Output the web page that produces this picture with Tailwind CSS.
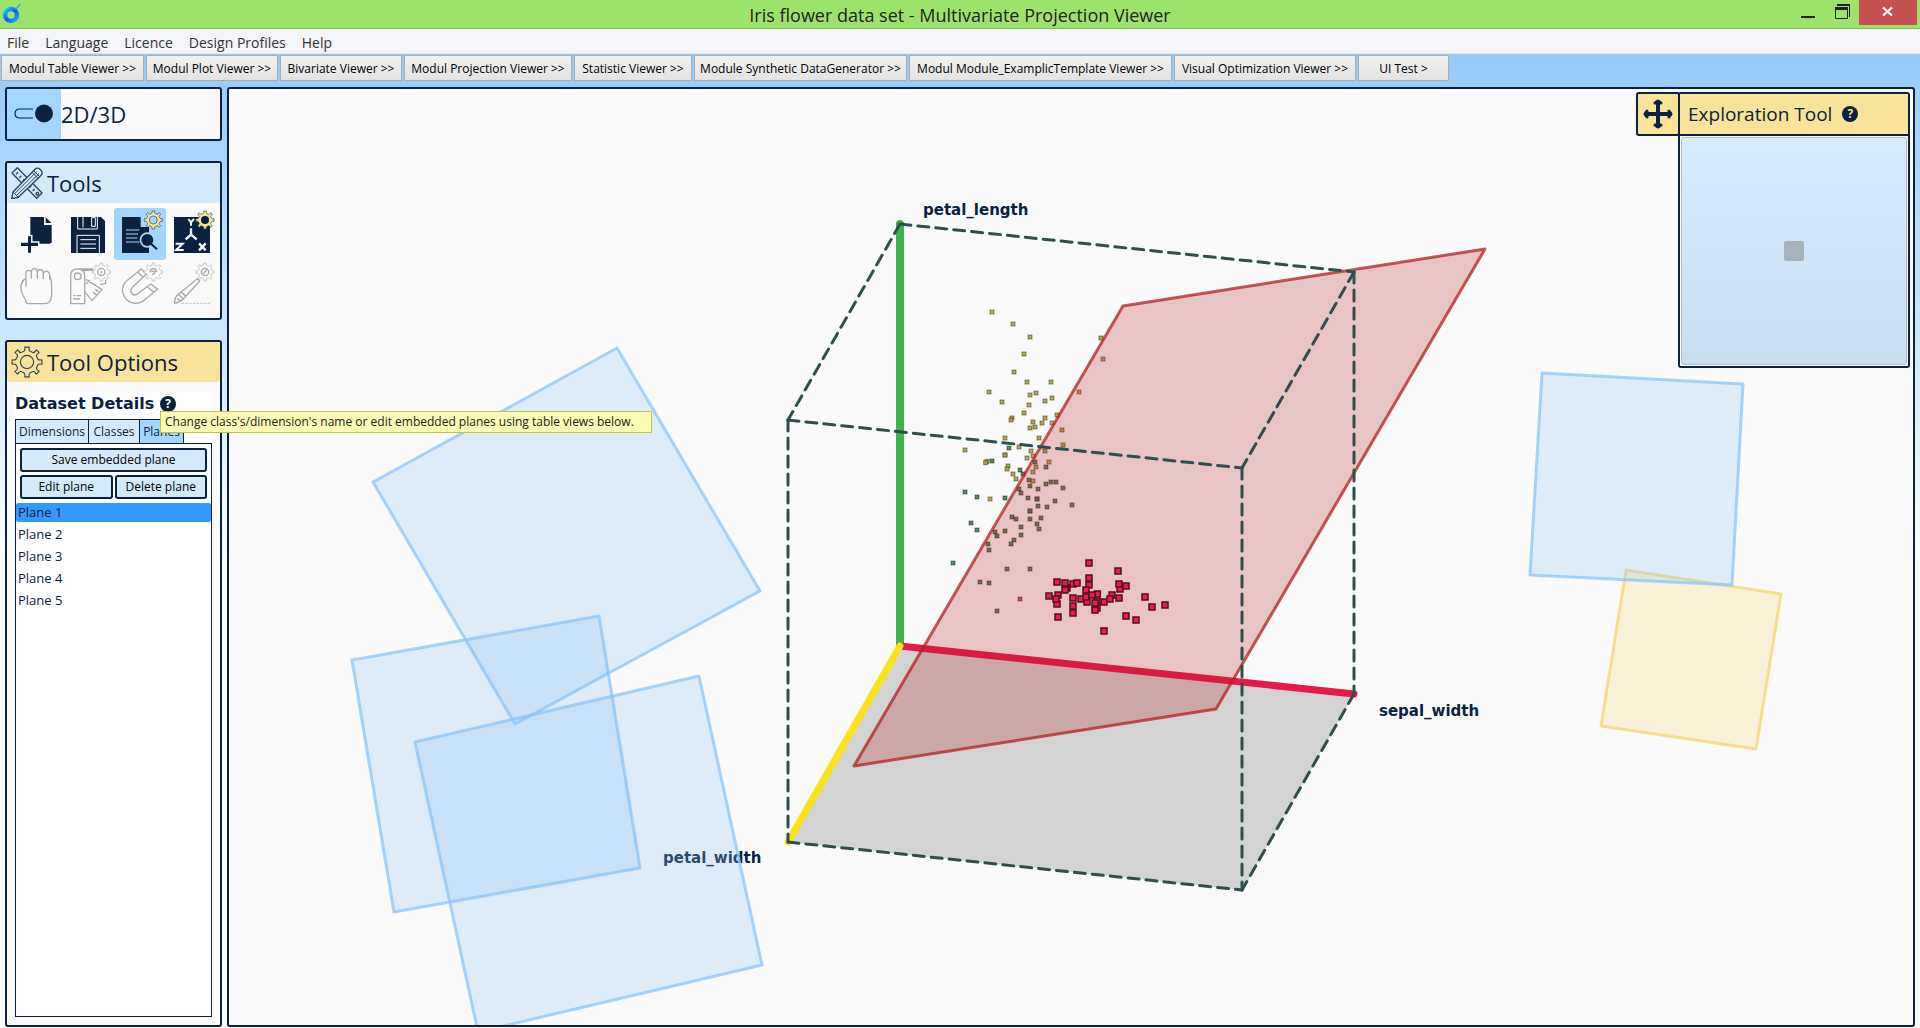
<!DOCTYPE html>
<html lang="en">

<head>
    <meta charset="UTF-8" />
    <meta name="viewport" content="width=device-width, initial-scale=1.0" />
    <title>Iris flower data set - Multivariate Projection Viewer</title>

    <script src="https://cdn.jsdelivr.net/npm/@tailwindcss/browser@4"></script>
</head>

<body class="h-screen min-h-[640px] flex flex-col overflow-hidden bg-linear-to-b from-[#88c5f9] to-[#fdfeff] to-55% text-[#0a2240] font-['Open_Sans',sans-serif]">

    <!-- Title bar -->
    <header class="relative h-[29px] shrink-0 flex items-center justify-between bg-[#9de36b] border-b border-[#7fbf4f] text-[#222]">
        <svg class="w-6 h-7" viewBox="0 0 24 28">
            <defs>
                <linearGradient id="ring" x1="0" y1="0" x2="1" y2="1">
                    <stop offset="0" stop-color="#12d4f5" />
                    <stop offset="0.5" stop-color="#0a5cf5" />
                    <stop offset="1" stop-color="#19a8ff" />
                </linearGradient>
            </defs>
            <circle cx="11" cy="15" r="6" fill="none" stroke="url(#ring)" stroke-width="4.500" />
            <path d="M15 9 Q18 8 20 4" fill="none" stroke="#35a9c9" stroke-width="1.500" />
        </svg>
        <h1 class="absolute inset-x-0 pt-px text-center text-[18px] leading-7 pointer-events-none">Iris flower data set - Multivariate Projection Viewer</h1>
        <div class="flex self-start pr-[3px]">
            <button class="w-9 h-[25px]" aria-label="Minimize">
                <svg class="w-9 h-[25px]" viewBox="0 0 36 25"><path d="M14 16h14v2H14z" fill="#222" /></svg>
            </button>
            <button class="w-9 h-[25px]" aria-label="Restore">
                <svg class="w-9 h-[25px]" viewBox="0 0 36 25">
                    <path d="M12 7h13v3H12zM14 4h13v2H14z" fill="#222" />
                    <path d="M12.500 8v10.500h12V8M26.500 5v12" fill="none" stroke="#222" />
                </svg>
            </button>
            <button class="w-[58px] h-[25px] bg-[#c75050]" aria-label="Close">
                <svg class="w-[58px] h-[25px]" viewBox="0 0 58 25"><path d="M24 7.500l9 8M33 7.500l-9 8" stroke="#fff" stroke-width="2.200" /></svg>
            </button>
        </div>
    </header>

    <!-- Menu -->
    <nav class="h-[25px] shrink-0 flex items-center gap-4 pl-[7px] pt-[3px] bg-[#f4f5f8] border-b border-[#e4e6ea] text-[14px] leading-5 text-[#333]">
        <button>File</button>
        <button>Language</button>
        <button>Licence</button>
        <button>Design Profiles</button>
        <button>Help</button>
    </nav>

    <!-- Module toolbar -->
    <div class="shrink-0 flex gap-[2px] pt-px pb-[6px] pl-px text-[12px] leading-5 text-black whitespace-nowrap">
        <button class="w-[143px] h-[26px] pt-px border border-[#adadad] bg-linear-to-b from-[#f1f1f1] to-[#e3e3e3]">Modul Table Viewer &gt;&gt;</button>
        <button class="w-[132px] h-[26px] pt-px border border-[#adadad] bg-linear-to-b from-[#f1f1f1] to-[#e3e3e3]">Modul Plot Viewer &gt;&gt;</button>
        <button class="w-[122px] h-[26px] pt-px border border-[#adadad] bg-linear-to-b from-[#f1f1f1] to-[#e3e3e3]">Bivariate Viewer &gt;&gt;</button>
        <button class="w-[168px] h-[26px] pt-px border border-[#adadad] bg-linear-to-b from-[#f1f1f1] to-[#e3e3e3]">Modul Projection Viewer &gt;&gt;</button>
        <button class="w-[118px] h-[26px] pt-px border border-[#adadad] bg-linear-to-b from-[#f1f1f1] to-[#e3e3e3]">Statistic Viewer &gt;&gt;</button>
        <button class="w-[213px] h-[26px] pt-px border border-[#adadad] bg-linear-to-b from-[#f1f1f1] to-[#e3e3e3]">Module Synthetic DataGenerator &gt;&gt;</button>
        <button class="w-[263px] h-[26px] pt-px border border-[#adadad] bg-linear-to-b from-[#f1f1f1] to-[#e3e3e3]">Modul Module_ExamplicTemplate Viewer &gt;&gt;</button>
        <button class="w-[182px] h-[26px] pt-px border border-[#adadad] bg-linear-to-b from-[#f1f1f1] to-[#e3e3e3]">Visual Optimization Viewer &gt;&gt;</button>
        <button class="w-[91px] h-[26px] pt-px border border-[#adadad] bg-linear-to-b from-[#f1f1f1] to-[#e3e3e3]">UI Test &gt;</button>
    </div>

    <main class="flex-1 min-h-0 flex gap-[5px] px-[5px] pb-px">

        <!-- Sidebar -->
        <aside class="w-[217px] shrink-0 flex flex-col gap-5">

            <label class="h-[54px] shrink-0 flex items-center border-2 border-[#0a2240] rounded-[3px] bg-[#fafafa] text-[22px]">
                <input type="checkbox" class="sr-only" checked />
                <svg class="w-[54px] h-[50px] bg-[#a3d6ff]" viewBox="0 0 54 50">
                    <path d="M26 20H13Q8 20 8 24.500T13 29H26" fill="none" stroke="#0a2240" stroke-width="1.200" />
                    <circle cx="37" cy="24.500" r="9" fill="#0a2240" />
                </svg>
                <span>2D/3D</span>
            </label>

            <section class="h-[159px] shrink-0 border-2 border-[#0a2240] rounded-[3px] bg-[#fafafa]">
                <h2 class="h-10 flex items-center gap-1 pl-1 bg-[#d4eafb] rounded-[3px] text-[22px]">
                    <svg class="w-8 h-8" viewBox="33 50 96 96" fill="#d4eafb" stroke="#2b4560" stroke-width="4" stroke-linejoin="round">
                        <path d="M36 68L52 52L126 128L110 144Z" />
                        <path d="M48 72l6-6M58 82l6-6M68 92l6-6M88 112l6-6M98 122l6-6" />
                        <circle cx="112" cy="130" r="4" />
                        <path d="M35 145L39 125L105 57Q112 50 120 57L124 61Q130 68 122 76L55 141Z" />
                        <path d="M39 125L55 141M44 130L110 64M50 135L117 70M96 66L114 84M101 61L119 79" stroke-width="3" />
                    </svg>
                    Tools
                </h2>
                <div class="grid grid-cols-[repeat(4,52px)] pl-[3px] pt-[5px]">
                    <button aria-label="New dataset">
                        <svg class="w-[52px] h-[52px]" viewBox="30 174 156 156">
                            <path d="M91 201H132V225H155V278L148 281H91Z" fill="#0a2240" />
                            <path d="M137 202L154 219H137Z" fill="#0a2240" />
                            <path d="M84 259H93V278H114V288H93V308H84V288H63V278H84Z" fill="#0a2240" stroke="#fafafa" stroke-width="9" paint-order="stroke" />
                        </svg>
                    </button>
                    <button aria-label="Save">
                        <svg class="w-[52px] h-[52px]" viewBox="186 174 156 156">
                            <path d="M213 201H303L315 213V309H213Z" fill="#0a2240" />
                            <path d="M233 201V237H292V201M249 201V232M275 203V229H286V203Z" fill="none" stroke="#fafafa" stroke-width="3" />
                            <path d="M231 309V256H298V309" fill="none" stroke="#fafafa" stroke-width="3" />
                            <path d="M241 269H288M241 282H288M241 295H288" stroke="#fafafa" stroke-width="3" />
                        </svg>
                    </button>
                    <button class="bg-[#a3d6ff] rounded-[3px]" aria-label="Dataset details">
                        <svg class="w-[52px] h-[52px]" viewBox="342 174 156 156">
                            <path d="M366 201H422V231H447V309H366Z" fill="#0a2240" />
                            <path d="M378 240H418M378 252H414M378 264H412M378 276H418" stroke="#a3d6ff" stroke-width="3" />
                            <circle cx="442" cy="270" r="23" fill="#a3d6ff" />
                            <path d="M448 278L468 296" stroke="#a3d6ff" stroke-width="12" />
                            <circle cx="442" cy="270" r="18" fill="#0a2240" />
                            <path d="M453 281L471 298" stroke="#0a2240" stroke-width="6" />
                            <use href="#cog" x="460" y="210" fill="#f9e29a" stroke="#2b4560" />
                            <circle cx="460" cy="210" r="12" fill="#a3d6ff" stroke="#2b4560" stroke-width="2" />
                        </svg>
                    </button>
                    <button aria-label="Axes">
                        <svg class="w-[52px] h-[52px]" viewBox="498 174 156 156">
                            <path d="M522 201H630V309H522Z" fill="#0a2240" />
                            <path d="M573 235V254L557 268M573 254L590 268" fill="none" stroke="#fafafa" stroke-width="7" />
                            <path d="M565 207L573 217L582 207M573 217V227" fill="none" stroke="#fafafa" stroke-width="6" />
                            <path d="M527 281H548L528 300H551" fill="none" stroke="#fafafa" stroke-width="6" />
                            <path d="M597 280L617 301M617 280L597 301" stroke="#fafafa" stroke-width="7" />
                            <use href="#cog" x="615" y="210" fill="#f9e29a" stroke="#2b4560" />
                            <circle cx="615" cy="210" r="12" fill="#0a2240" />
                        </svg>
                    </button>
                    <button aria-label="Pan" disabled>
                        <svg class="w-[52px] h-[52px]" viewBox="30 330 156 156" fill="none" stroke="#a9a9a9" stroke-width="4" stroke-linecap="round" stroke-linejoin="round">
                            <path d="M79 458Q78 450 70 438Q60 418 64 403Q67 390 78 385V369Q78 361 86 361Q92 361 94 368Q94 356 103 356Q111 356 112 364Q115 358 122 358Q130 360 130 369Q134 363 142 364Q149 367 149 376Q156 392 155 412V436Q154 450 146 458Q140 461 134 461H88Q80 461 79 458M78 385V409M94 368V384M112 364V384M130 369V386M149 376V387" />
                        </svg>
                    </button>
                    <button aria-label="Classes" disabled>
                        <svg class="w-[52px] h-[52px]" viewBox="186 330 156 156" fill="none" stroke="#a9a9a9" stroke-width="4" stroke-linejoin="round">
                            <path d="M212 461V376Q212 357 233 357Q254 357 254 376V461ZM233 357H280M243 361H282" />
                            <circle cx="233" cy="379" r="10" />
                            <path d="M220 437H226M230 437H243M220 447H240M258 388L306 419L276 452L254 425M258 402L270 390M286 418l10 7M279 426l10 8M300 404L317 400V390" />
                            <use href="#cog" x="304" y="366" fill="#fafafa" stroke="#b4b4b4" />
                            <circle cx="304" cy="366" r="11" />
                            <path d="M304 362V371" stroke-width="4" />
                        </svg>
                    </button>
                    <button aria-label="Snap" disabled>
                        <svg class="w-[52px] h-[52px]" viewBox="342 330 156 156" fill="none" stroke="#a9a9a9" stroke-width="4" stroke-linejoin="round">
                            <path d="M424 357L439 373L397 412Q389 422 396 431Q404 439 413 431L452 402L473 417L427 455Q401 467 380 449Q360 427 371 404Q374 397 382 391ZM414 367L429 382M442 410L461 427" />
                            <use href="#cog" x="460" y="366" fill="#fafafa" stroke="#b4b4b4" />
                            <path d="M450 367Q451 356 461 356Q471 358 470 366M454 364H467M457 375L466 366" />
                        </svg>
                    </button>
                    <button aria-label="Brush" disabled>
                        <svg class="w-[52px] h-[52px]" viewBox="498 330 156 156" fill="none" stroke="#a9a9a9" stroke-width="4" stroke-linejoin="round">
                            <path d="M523 460Q525 438 535 433L592 386L599 393L550 447Q541 456 523 460M535 433L550 447M544 426L557 439M531 446L541 452" />
                            <path d="M545 460H630" stroke-width="2" stroke-dasharray="8 3" />
                            <use href="#cog" x="615" y="366" fill="#fafafa" stroke="#b4b4b4" />
                            <circle cx="615" cy="366" r="11" />
                            <path d="M609 372L622 358" stroke-width="4" />
                        </svg>
                    </button>
                </div>
            </section>

            <section class="flex-1 min-h-0 flex flex-col border-2 border-[#0a2240] rounded-[3px] bg-[#fafafa]">
                <h2 class="h-10 shrink-0 flex items-center gap-1 pl-1 bg-[#f9e29a] rounded-[3px] text-[22px]">
                    <svg class="w-8 h-8" viewBox="-29 -29 58 58" fill="none" stroke="#2b4560" stroke-width="2">
                        <path id="cog" stroke-width="2" stroke-linejoin="round" d="M-5-20Q-3-22-4-27H4Q3-22 5-20L11-17Q14-17 17-22L22-17Q17-14 17-11L20-5Q22-3 27-4V4Q22 3 20 5L17 11Q17 14 22 17L17 22Q14 17 11 17L5 20Q3 22 4 27H-4Q-3 22-5 20L-11 17Q-14 17-17 22L-22 17Q-17 14-17 11L-20 5Q-22 3-27 4V-4Q-22-3-20-5L-17-11Q-17-14-22-17L-17-22Q-14-17-11-17Z" />
                        <circle r="12" />
                    </svg>
                    Tool Options
                </h2>
                <div class="flex-1 min-h-0 flex flex-col mt-[10px] mx-2 mb-2 bg-white text-[12px]">
                    <div class="relative h-[27px] shrink-0 flex items-start gap-[6px]">
                        <h3 class="font-['DejaVu_Sans',sans-serif] text-[16px] leading-6 font-bold whitespace-nowrap">Dataset Details</h3>
                        <button class="size-4 mt-1 shrink-0 rounded-full bg-[#0a2240] text-white text-[12px] leading-4 font-bold" aria-describedby="details-tip">?</button>
                        <div id="details-tip" role="tooltip" class="absolute z-10 left-[145px] top-[19px] w-[492px] h-[22px] flex items-center pl-1 border border-[#c6c33c] bg-[#fafab4] text-[#222] whitespace-nowrap">Change class's/dimension's name or edit embedded planes using table views below.</div>
                    </div>
                    <div class="h-6 shrink-0 flex" role="tablist">
                        <button role="tab" class="w-[74px] border border-b-0 border-[#0a2240] bg-[#d4eafb]">Dimensions</button>
                        <button role="tab" class="w-[51px] border border-b-0 border-l-0 border-[#0a2240] bg-[#d4eafb]">Classes</button>
                        <button role="tab" aria-selected="true" class="w-[44px] border border-b-0 border-l-0 border-[#0a2240] bg-[#a3d6ff]">Planes</button>
                    </div>
                    <div class="flex-1 min-h-0 flex flex-col border border-[#0a2240]">
                        <div class="grid grid-cols-2 gap-x-[2px] gap-y-[3px] p-1 text-black">
                            <button class="col-span-2 h-6 border-2 border-[#0a2240] rounded-[3px] bg-[#d4eafb] leading-5">Save embedded plane</button>
                            <button class="h-6 border-2 border-[#0a2240] rounded-[3px] bg-[#d4eafb] leading-5">Edit plane</button>
                            <button class="h-6 border-2 border-[#0a2240] rounded-[3px] bg-[#d4eafb] leading-5">Delete plane</button>
                        </div>
                        <ul id="plane-list" class="flex flex-col gap-[3px] text-[13px]" role="listbox" aria-label="Planes"></ul>
                    </div>
                </div>
            </section>
        </aside>

        <!-- Projection view -->
        <section class="relative flex-1 min-w-0 border-2 border-[#0a2240] rounded-[3px] bg-[#fafafa] overflow-hidden">
            <svg class="absolute inset-0 w-full h-full" role="img" aria-label="Projection of the Iris data set">
                <g transform="translate(-229 -89)" stroke-linejoin="round" stroke-linecap="round">
                    <path d="M900 646L1354 694L1242 890L788 842Z" fill="#d3d3d3" />
                    <g fill="none" stroke-width="7">
                        <path d="M900 224V646" stroke="#3cb44b" stroke-width="8" />
                        <path d="M900 646L1354 694" stroke="#e6194b" />
                        <path d="M900 646L788 842" stroke="#ffe119" />
                    </g>
                    <g id="faded-points" stroke="#000" stroke-opacity="0.400" stroke-linejoin="miter"></g>
                    <path d="M1123 306L1485 249L1216 709L854 766Z" fill="#b22222" fill-opacity="0.250" stroke="#b22222" stroke-opacity="0.750" stroke-width="3" />
                    <g id="active-points" stroke="#50101f" stroke-width="1.500" stroke-linejoin="miter"></g>
                    <g fill="none" stroke="#2f4f4f" stroke-width="3" stroke-dasharray="11 7">
                        <path d="M900 224L1354 272" />
                        <path d="M900 224L788 420" />
                        <path d="M788 420L1242 468" />
                        <path d="M1354 272L1242 468" />
                        <path d="M788 420V842" />
                        <path d="M1354 272V694" />
                        <path d="M1242 468V890" />
                        <path d="M788 842L1242 890" />
                        <path d="M1354 694L1242 890" />
                    </g>
                    <g class="font-['DejaVu_Sans',sans-serif] text-[15px] font-bold" fill="#0a2240">
                        <text x="923" y="215">petal_length</text>
                        <text x="1379" y="716">sepal_width</text>
                        <text x="663" y="863">petal_width</text>
                    </g>
                    <path d="M1626 570L1781 594L1756 749L1601 726Z" fill="#f6d66e" fill-opacity="0.250" stroke="#f6d66e" stroke-opacity="0.750" stroke-width="3" />
                    <g fill="#8ac2fa" fill-opacity="0.250" stroke="#8ac6fa" stroke-opacity="0.750" stroke-width="3">
                        <path d="M373 482L617 348L760 591L515 724Z" />
                        <path d="M352 660L599 616L640 868L394 912Z" />
                        <path d="M415 742L699 676L762 965L478 1032Z" />
                        <path d="M1542 373L1743 384L1732 585L1530 575Z" />
                    </g>
                </g>
            </svg>

            <!-- Floating exploration panel -->
            <div class="absolute top-[3px] right-[3px] flex items-start">
                <button class="w-11 h-11 -mr-[2px] border-2 border-[#0a2240] rounded-[3px] bg-[#f9e29a] flex items-center justify-center" aria-label="Move panel">
                    <svg class="w-8 h-8" viewBox="-16 -16 32 32" fill="none" stroke="#0a2240" stroke-width="4" stroke-linecap="round" stroke-linejoin="round">
                        <path d="M0-12V12M-12 0H12" />
                        <path d="M-3-11L0-13L3-11ZM-3 11L0 13L3 11ZM-11-3L-13 0L-11 3ZM11-3L13 0L11 3Z" stroke-width="3" fill="#0a2240" />
                    </svg>
                </button>
                <div class="w-[232px] border-2 border-[#0a2240] rounded-[3px] bg-[#fafafa]">
                    <div class="h-[42px] flex items-center gap-[10px] pl-2 bg-[#f9e29a] border-b-2 border-[#0a2240]">
                        <h2 class="text-[19px] whitespace-nowrap">Exploration Tool</h2>
                        <button class="size-4 rounded-full bg-[#0a2240] text-[#f9e29a] text-[12px] leading-4 font-bold" aria-label="Help">?</button>
                    </div>
                    <div class="h-[228px] m-px flex items-center justify-center border border-[#b9bec3] rounded-[3px] bg-linear-to-b from-[#d7ecff] to-[#c9dff0]">
                        <div class="size-5 rounded-[2px] bg-[#a8b2ba]"></div>
                    </div>
                </div>
            </div>
        </section>
    </main>

    <script>
        const planes = ['Plane 1', 'Plane 2', 'Plane 3', 'Plane 4', 'Plane 5'];
        let selected = 0;

        // projected points, three units per pixel, relative to ORIGIN
        const SCALE = 3;
        const ORIGIN = { x: 930, y: 290 };

        const virginica = [
            [186, 66], [249, 102], [300, 141], [513, 144], [282, 192], [519, 207], [252, 246], [291, 276], [363, 276],
            [177, 306], [447, 306], [318, 309], [300, 315], [366, 324], [345, 333], [216, 336], [297, 345], [282, 369],
            [381, 375], [246, 384], [243, 390], [345, 384], [309, 396], [336, 399], [366, 399], [315, 411], [300, 414],
            [396, 420], [225, 444], [327, 444], [399, 465], [267, 471], [105, 480], [303, 483], [345, 483], [225, 495],
            [225, 495], [291, 504], [309, 498], [171, 514], [167, 518], [357, 516], [234, 528], [231, 537], [318, 531],
            [309, 546], [249, 552], [258, 567], [309, 573], [180, 627]
        ];
        const versicolor = [
            [237, 474], [186, 513], [315, 516], [348, 531], [270, 540], [279, 552], [297, 570], [300, 588], [348, 582],
            [363, 576], [378, 576], [399, 594], [267, 597], [324, 597], [273, 609], [105, 606], [141, 621], [225, 624],
            [294, 624], [321, 627], [321, 627], [375, 633], [324, 648], [351, 651], [426, 645], [300, 663], [300, 663],
            [246, 681], [258, 687], [300, 687], [333, 684], [123, 699], [141, 720], [321, 702], [327, 717], [273, 711],
            [225, 723], [195, 726], [201, 738], [273, 735], [252, 750], [243, 762], [174, 762], [177, 780], [69, 819],
            [231, 837], [300, 837], [150, 876], [177, 879], [201, 963]
        ];
        const outliers = [[270, 927]];
        const setosa = [
            [411, 894], [384, 915], [501, 933], [501, 954], [502, 912], [546, 915], [477, 819], [564, 843], [477, 885],
            [477, 864], [381, 876], [429, 882], [405, 879], [441, 879], [570, 897], [567, 882], [588, 888], [405, 900],
            [357, 918], [381, 942], [378, 927], [429, 924], [453, 927], [471, 936], [468, 900], [468, 921], [486, 915],
            [495, 960], [495, 939], [522, 936], [540, 927], [567, 924], [429, 969], [429, 948], [384, 981], [645, 921],
            [666, 951], [705, 945], [588, 978], [618, 990], [522, 1023]
        ];

        function drawPoints(groupId, points, size, fill, opacity) {
            const group = document.getElementById(groupId);
            points.forEach(([px, py]) => {
                const rect = document.createElementNS('http://www.w3.org/2000/svg', 'rect');
                rect.setAttribute('x', ORIGIN.x + px / SCALE - size / 2);
                rect.setAttribute('y', ORIGIN.y + py / SCALE - size / 2);
                rect.setAttribute('width', size);
                rect.setAttribute('height', size);
                rect.setAttribute('fill', fill);
                rect.setAttribute('fill-opacity', opacity);
                group.appendChild(rect);
            });
        }

        function renderPlanes() {
            const list = document.getElementById('plane-list');
            list.innerHTML = '';
            planes.forEach((name, i) => {
                const li = document.createElement('li');
                li.setAttribute('role', 'option');
                li.setAttribute('aria-selected', i === selected);
                li.className = i === selected
                    ? 'h-[19px] leading-[19px] pl-[2px] rounded-[2px] bg-[#3399ff] cursor-default'
                    : 'h-[19px] leading-[19px] pl-[2px] cursor-default';
                li.textContent = name;
                li.onclick = () => {
                    selected = i;
                    renderPlanes();
                };
                list.appendChild(li);
            });
        }

        drawPoints('faded-points', versicolor, 4, '#44804c', 0.9);
        drawPoints('faded-points', virginica, 4, '#b3a03c', 0.9);
        drawPoints('faded-points', outliers, 4, '#963c50', 0.8);
        drawPoints('active-points', setosa, 6, '#f0194b', 1);
        renderPlanes();
    </script>
</body>

</html>
